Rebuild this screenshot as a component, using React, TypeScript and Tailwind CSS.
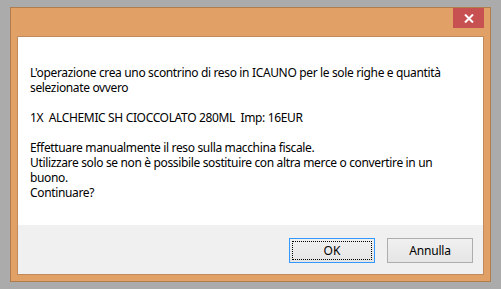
import React from "react";

export default function App() {
  const font = { fontFamily: '"Noto Sans", "Open Sans", sans-serif' };
  return (
    <div className="w-[501px] h-[289px] bg-[#ababab] pt-[7px] pl-[10px] overflow-hidden" style={font}>
      <div className="w-[481px] h-[275px] border border-[#b07d4e] bg-[#e0a066] flex flex-col px-[6px] pb-[6px]">
        <div className="h-[28px] flex justify-end items-start">
          <div className="w-[31px] h-[20px] bg-[#c75050] flex items-center justify-center">
            <svg width="10" height="9" viewBox="0 0 10 9">
              <path d="M1 0.5 L9 8.5 M9 0.5 L1 8.5" stroke="#ffffff" strokeWidth="2" />
            </svg>
          </div>
        </div>
        <div className="flex-1 border border-[#c08a5a] bg-white flex flex-col">
          <div className="flex-1 pl-[12px] pt-[28px] text-[12px] leading-[15px] tracking-[-0.35px] text-black">
            <div>L'operazione crea uno scontrino di reso in ICAUNO per le sole righe e quantità</div>
            <div>selezionate ovvero</div>
            <div>&nbsp;</div>
            <div className="whitespace-pre">1X  ALCHEMIC SH CIOCCOLATO 280ML  Imp: 16EUR</div>
            <div>&nbsp;</div>
            <div>Effettuare manualmente il reso sulla macchina fiscale.</div>
            <div>Utilizzare solo se non è possibile sostituire con altra merce o convertire in un</div>
            <div>buono.</div>
            <div>Continuare?</div>
          </div>
          <div className="h-[49px] bg-[#f0f0f0] flex justify-end items-start pt-[13px] pr-[10px] gap-[12px]">
            <div className="w-[86px] h-[25px] border border-[#3399ff] bg-gradient-to-b from-[#f0f0f0] to-[#e5e5e5] p-[2px]">
              <div className="w-full h-full border border-dotted border-black flex items-center justify-center text-[12px] text-black">OK</div>
            </div>
            <div className="w-[86px] h-[25px] border border-[#adadad] bg-gradient-to-b from-[#f0f0f0] to-[#e5e5e5] flex items-center justify-center text-[12px] tracking-[-0.2px] text-black">Annulla</div>
          </div>
        </div>
      </div>
    </div>
  );
}
